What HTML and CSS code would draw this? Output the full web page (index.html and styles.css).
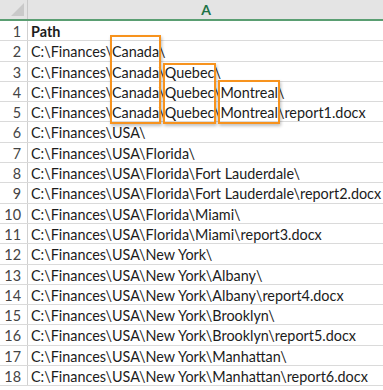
FILE: index.html
```html
<!DOCTYPE html>
<html>
<head>
<meta charset="utf-8">
<link rel="stylesheet" href="styles.css">
</head>
<body>
<div class="sheet">
  <div class="row head">
    <div class="corner"><div class="tri"></div></div>
    <div class="colhead">A</div>
  </div>
  <div class="row"><div class="num">1</div><div class="cell bold">Path</div></div>
  <div class="row"><div class="num">2</div><div class="cell">C:\Finances\<span class="mark">Canada<span class="box box-canada"></span></span>\</div></div>
  <div class="row"><div class="num">3</div><div class="cell">C:\Finances\Canada\<span class="mark">Quebec<span class="box box-quebec"></span></span>\</div></div>
  <div class="row"><div class="num">4</div><div class="cell">C:\Finances\Canada\Quebec\<span class="mark">Montreal<span class="box box-montreal"></span></span>\</div></div>
  <div class="row"><div class="num">5</div><div class="cell">C:\Finances\Canada\Quebec\Montreal\report1.docx</div></div>
  <div class="row"><div class="num">6</div><div class="cell">C:\Finances\USA\</div></div>
  <div class="row"><div class="num">7</div><div class="cell">C:\Finances\USA\Florida\</div></div>
  <div class="row"><div class="num">8</div><div class="cell">C:\Finances\USA\Florida\Fort Lauderdale\</div></div>
  <div class="row"><div class="num">9</div><div class="cell">C:\Finances\USA\Florida\Fort Lauderdale\report2.docx</div></div>
  <div class="row"><div class="num">10</div><div class="cell">C:\Finances\USA\Florida\Miami\</div></div>
  <div class="row"><div class="num">11</div><div class="cell">C:\Finances\USA\Florida\Miami\report3.docx</div></div>
  <div class="row"><div class="num">12</div><div class="cell">C:\Finances\USA\New York\</div></div>
  <div class="row"><div class="num">13</div><div class="cell">C:\Finances\USA\New York\Albany\</div></div>
  <div class="row"><div class="num">14</div><div class="cell">C:\Finances\USA\New York\Albany\report4.docx</div></div>
  <div class="row"><div class="num">15</div><div class="cell">C:\Finances\USA\New York\Brooklyn\</div></div>
  <div class="row"><div class="num">16</div><div class="cell">C:\Finances\USA\New York\Brooklyn\report5.docx</div></div>
  <div class="row"><div class="num">17</div><div class="cell">C:\Finances\USA\New York\Manhattan\</div></div>
  <div class="row"><div class="num">18</div><div class="cell">C:\Finances\USA\New York\Manhattan\report6.docx</div></div>
</div>
</body>
</html>
```
FILE: styles.css
```css
html, body { margin: 0; padding: 0; background: #fff; }
body { width: 383px; height: 390px; overflow: hidden; }
.sheet {
  font-family: "Lato", "Liberation Sans", sans-serif;
  font-size: 14.4px;
  color: #1c1c1c;
}
.row {
  display: flex;
  height: 20.3px;
  box-sizing: border-box;
  border-bottom: 1px solid #dadada;
}
.row.head {
  height: 21px;
  background: #e4e4e4;
  border-bottom: 2px solid #5a9e72;
}
.corner {
  width: 28px;
  flex: none;
  position: relative;
  border-right: 1px solid #c8c8c8;
  box-sizing: border-box;
}
.tri {
  position: absolute;
  right: 3px;
  bottom: 3px;
  width: 0; height: 0;
  border-left: 13px solid transparent;
  border-bottom: 13px solid #c9c9c9;
}
.colhead {
  flex: none;
  width: 356px;
  text-align: center;
  font-weight: bold;
  color: #217346;
  line-height: 19px;
  font-size: 14px;
}
.num {
  width: 28px;
  flex: none;
  box-sizing: border-box;
  text-align: right;
  padding-right: 6px;
  padding-top: 1px;
  border-right: 1px solid #d0d0d0;
  color: #444;
  line-height: 19px;
}
.cell {
  padding-left: 3px;
  padding-top: 1px;
  line-height: 19px;
  white-space: nowrap;
}
.bold { font-weight: bold; }
.mark { position: relative; }
.box {
  position: absolute;
  left: -2px;
  right: -2px;
  box-sizing: border-box;
  border: 2px solid #f7931e;
  box-shadow: 1px 2px 3px rgba(0,0,0,0.25);
}
.box-canada { top: -8px; height: 89px; }
.box-quebec { top: -0.5px; height: 61px; }
.box-montreal { top: -3.7px; height: 44px; }
```
